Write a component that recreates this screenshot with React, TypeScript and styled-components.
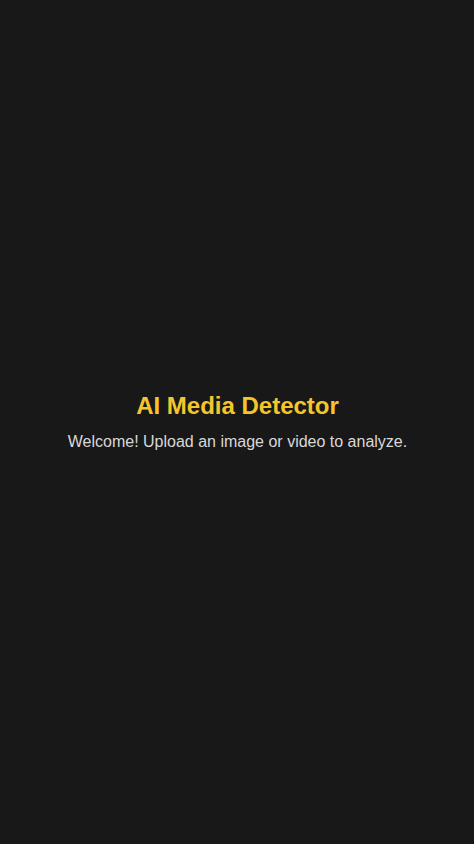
import React from "react";
import styled, { createGlobalStyle } from "styled-components";

const Global = createGlobalStyle`
  html, body { margin: 0; padding: 0; background: #181818; }
  body { font-family: "Liberation Sans", Arial, sans-serif; }
`;

const Page = styled.main`
  min-height: 100vh;
  display: flex;
  flex-direction: column;
  align-items: center;
  justify-content: center;
  background: #181818;
  text-align: center;
  padding-left: 1px;
  box-sizing: border-box;
`;

const Title = styled.h1`
  margin: 1px 0 11px;
  font-size: 24px;
  font-weight: 700;
  color: #f5c62c;
  line-height: 1.2;
`;

const Subtitle = styled.p`
  margin: 0 0 2px;
  font-size: 16px;
  color: #d8d8d8;
  line-height: 1.2;
`;

export default function App() {
  return (
    <>
      <Global />
      <Page>
        <Title>AI Media Detector</Title>
        <Subtitle>Welcome! Upload an image or video to analyze.</Subtitle>
      </Page>
    </>
  );
}
